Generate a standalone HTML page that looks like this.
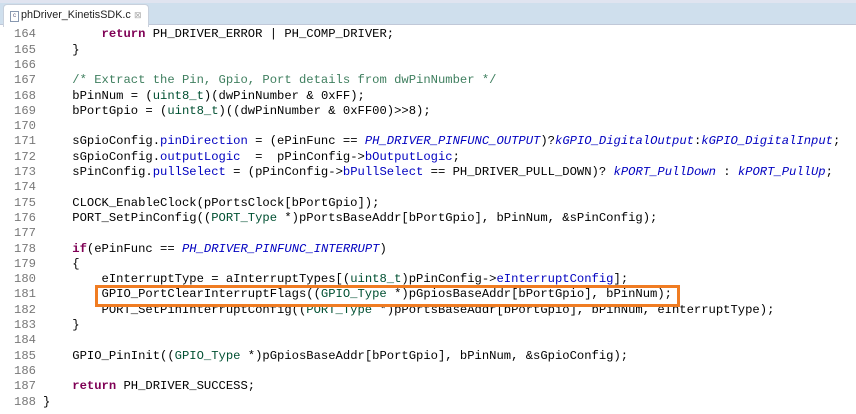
<!DOCTYPE html>
<html><head><meta charset="utf-8"><style>
body{margin:0;width:856px;height:414px;background:#fff;overflow:hidden;position:relative;font-family:"Liberation Mono",monospace}
.top{position:absolute;left:0;top:0;width:856px;height:25px;background:#cfdfed;border-top:3px solid #e0e4f0;box-sizing:border-box;border-bottom:1px solid #c0c8d8}
.tab{position:absolute;left:3px;top:4px;width:146px;height:23px;background:#fff;border-radius:4px 4px 0 0;border:1px solid #c8d0dc;border-bottom:none;box-sizing:border-box;font-family:"Liberation Sans",sans-serif;font-size:10.8px;color:#222;line-height:21px;padding-left:17px;white-space:nowrap}
.tab .ic{position:absolute;left:6px;top:6px;width:7px;height:9px;border:1px solid #8898b0;font-size:6px;line-height:8px;text-align:center;color:#557}
.tab .x{position:absolute;left:130px;top:0;font-size:9px;color:#aaa}
.code{position:absolute;left:0;top:27.4px;font-size:12.2px;line-height:15.3px;white-space:pre;color:#000}
.ln{position:absolute;left:0;top:27.4px;width:36px;text-align:right;font-size:12.2px;line-height:15.3px;white-space:pre;color:#787878}
.c{position:absolute;left:43px}
.k{color:#7f0055;font-weight:bold}
.cm{color:#3f7f5f}
.t{color:#005032}
.i{color:#0000c0;font-style:italic}
.f{color:#0000c0}
.box{position:absolute;left:95px;top:285px;width:585px;height:22px;border:3px solid #f07c22;box-sizing:border-box}
</style></head><body>
<div class="top"></div>
<div class="tab"><span class="ic">c</span>phDriver_KinetisSDK.c<span class="x">⊠</span></div>
<div class="ln">164
165
166
167
168
169
170
171
172
173
174
175
176
177
178
179
180
181
182
183
184
185
186
187
188</div>
<div class="code"><div class="c">        <span class="k">return</span> PH_DRIVER_ERROR | PH_COMP_DRIVER;
    }

    <span class="cm">/* Extract the Pin, Gpio, Port details from dwPinNumber */</span>
    bPinNum = (<span class="t">uint8_t</span>)(dwPinNumber &amp; 0xFF);
    bPortGpio = (<span class="t">uint8_t</span>)((dwPinNumber &amp; 0xFF00)&gt;&gt;8);

    sGpioConfig.<span class="f">pinDirection</span> = (ePinFunc == <span class="i">PH_DRIVER_PINFUNC_OUTPUT</span>)?<span class="i">kGPIO_DigitalOutput</span>:<span class="i">kGPIO_DigitalInput</span>;
    sGpioConfig.<span class="f">outputLogic</span>  =  pPinConfig-&gt;<span class="f">bOutputLogic</span>;
    sPinConfig.<span class="f">pullSelect</span> = (pPinConfig-&gt;<span class="f">bPullSelect</span> == PH_DRIVER_PULL_DOWN)? <span class="i">kPORT_PullDown</span> : <span class="i">kPORT_PullUp</span>;

    CLOCK_EnableClock(pPortsClock[bPortGpio]);
    PORT_SetPinConfig((<span class="t">PORT_Type</span> *)pPortsBaseAddr[bPortGpio], bPinNum, &amp;sPinConfig);

    <span class="k">if</span>(ePinFunc == <span class="i">PH_DRIVER_PINFUNC_INTERRUPT</span>)
    {
        eInterruptType = aInterruptTypes[(<span class="t">uint8_t</span>)pPinConfig-&gt;<span class="f">eInterruptConfig</span>];
        GPIO_PortClearInterruptFlags((<span class="t">GPIO_Type</span> *)pGpiosBaseAddr[bPortGpio], bPinNum);
        PORT_SetPinInterruptConfig((<span class="t">PORT_Type</span> *)pPortsBaseAddr[bPortGpio], bPinNum, eInterruptType);
    }

    GPIO_PinInit((<span class="t">GPIO_Type</span> *)pGpiosBaseAddr[bPortGpio], bPinNum, &amp;sGpioConfig);

    <span class="k">return</span> PH_DRIVER_SUCCESS;
}</div></div>
<div class="box"></div>
</body></html>
